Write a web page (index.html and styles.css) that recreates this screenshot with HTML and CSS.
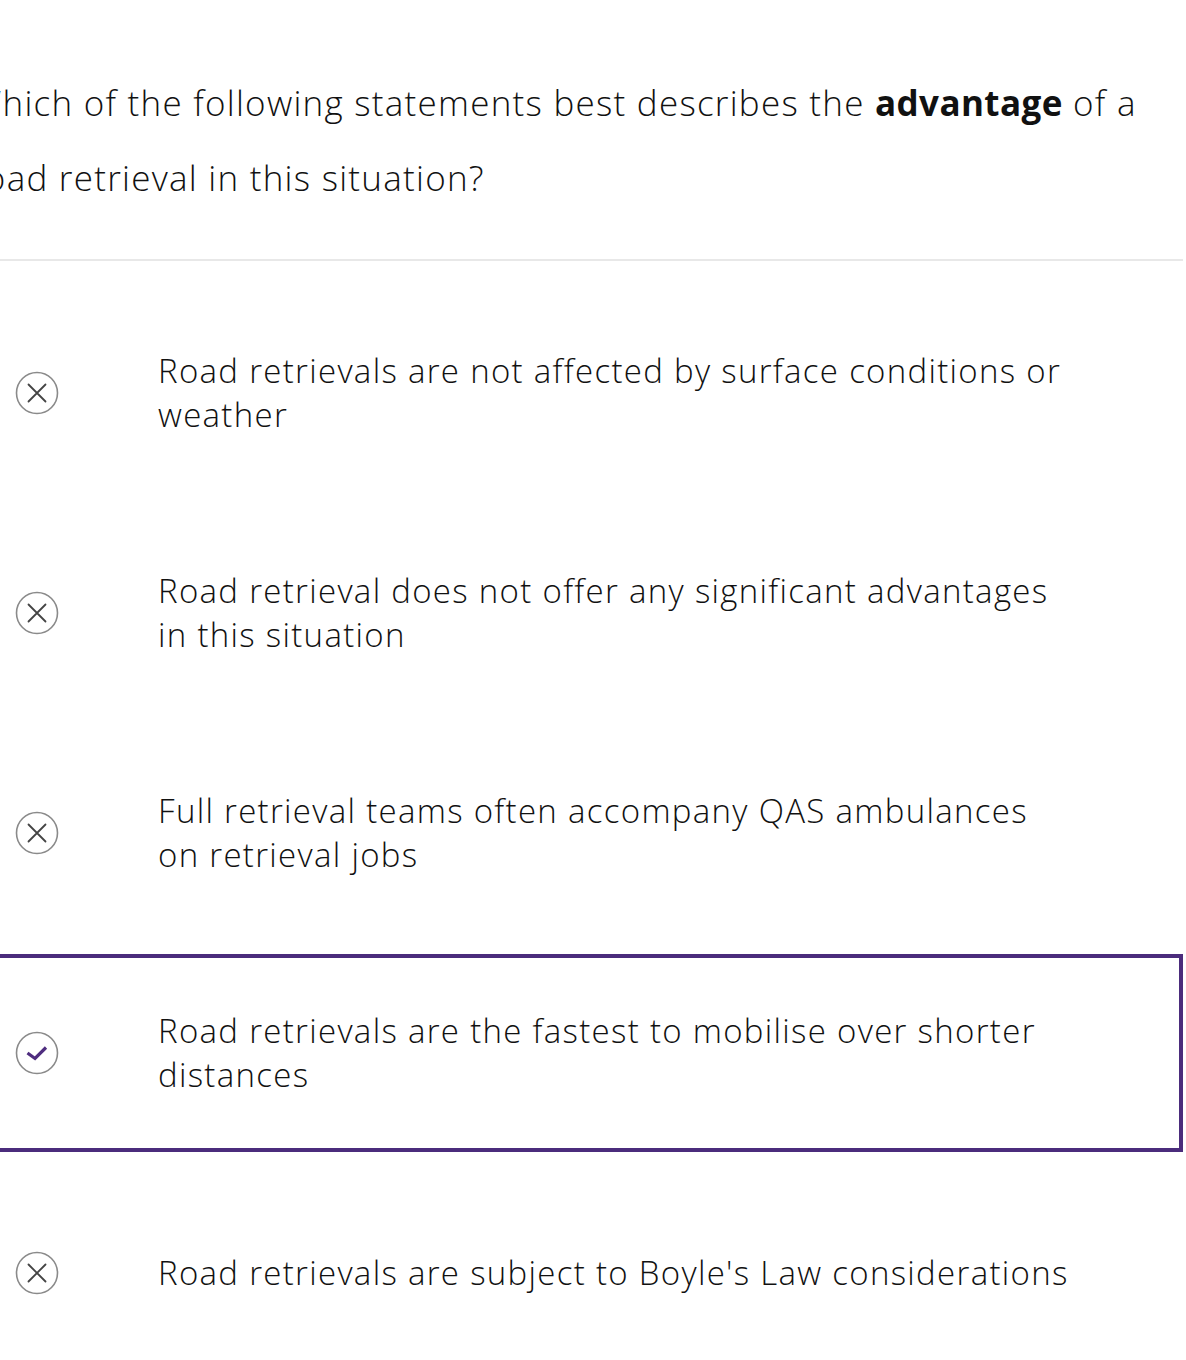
FILE: index.html
```html
<!DOCTYPE html>
<html lang="en">
<head>
<meta charset="utf-8">
<title>Question</title>
<link rel="stylesheet" href="styles.css">
</head>
<body>
<div class="page">
  <p class="question">Which of the following statements best describes the <strong>advantage</strong> of a road retrieval in this situation?</p>
  <div class="divider"></div>
  <ul class="options">
    <li class="option">
      <span class="mark"><svg viewBox="0 0 44 44" width="44" height="44"><circle cx="22" cy="22" r="20.5" fill="none" stroke="#8a8a8a" stroke-width="1.6"/><path d="M13.5 13.5 L30.5 30.5 M30.5 13.5 L13.5 30.5" stroke="#444" stroke-width="1.8" stroke-linecap="round"/></svg></span>
      <span class="text">Road retrievals are not affected by surface conditions or weather</span>
    </li>
    <li class="option">
      <span class="mark"><svg viewBox="0 0 44 44" width="44" height="44"><circle cx="22" cy="22" r="20.5" fill="none" stroke="#8a8a8a" stroke-width="1.6"/><path d="M13.5 13.5 L30.5 30.5 M30.5 13.5 L13.5 30.5" stroke="#444" stroke-width="1.8" stroke-linecap="round"/></svg></span>
      <span class="text">Road retrieval does not offer any significant advantages in this situation</span>
    </li>
    <li class="option">
      <span class="mark"><svg viewBox="0 0 44 44" width="44" height="44"><circle cx="22" cy="22" r="20.5" fill="none" stroke="#8a8a8a" stroke-width="1.6"/><path d="M13.5 13.5 L30.5 30.5 M30.5 13.5 L13.5 30.5" stroke="#444" stroke-width="1.8" stroke-linecap="round"/></svg></span>
      <span class="text">Full retrieval teams often accompany QAS ambulances on retrieval jobs</span>
    </li>
    <li class="option selected">
      <span class="mark"><svg viewBox="0 0 44 44" width="44" height="44"><circle cx="22" cy="22" r="20.5" fill="none" stroke="#8a8a8a" stroke-width="1.6"/><path d="M12.5 22 L20 27.5 L31 16.5" fill="none" stroke="#4f2d7f" stroke-width="3.2" stroke-linecap="butt" stroke-linejoin="miter"/></svg></span>
      <span class="text">Road retrievals are the fastest to mobilise over shorter distances</span>
    </li>
    <li class="option">
      <span class="mark"><svg viewBox="0 0 44 44" width="44" height="44"><circle cx="22" cy="22" r="20.5" fill="none" stroke="#8a8a8a" stroke-width="1.6"/><path d="M13.5 13.5 L30.5 30.5 M30.5 13.5 L13.5 30.5" stroke="#444" stroke-width="1.8" stroke-linecap="round"/></svg></span>
      <span class="text">Road retrievals are subject to Boyle's Law considerations</span>
    </li>
  </ul>
</div>
</body>
</html>
```

FILE: styles.css
```css
html, body {
  margin: 0;
  padding: 0;
  background: #fff;
  overflow: hidden;
}
body {
  font-family: "Open Sans", "Lato", sans-serif;
  color: #111;
}
.page {
  width: 1213px;
  margin-left: -30px;
  padding-top: 65px;
}
.question {
  margin: 0;
  padding: 0 30px 0 0;
  font-size: 35px;
  line-height: 75px;
  font-weight: 300;
  letter-spacing: 1.25px;
}
.question strong {
  font-weight: 700;
  letter-spacing: 0.4px;
}
.divider {
  height: 2px;
  background: #e8e8e8;
  margin-top: 44px;
}
.options {
  list-style: none;
  margin: 33px 0 0;
  padding: 0;
  display: flex;
  flex-direction: column;
  gap: 22px;
}
.option {
  height: 198px;
  box-sizing: border-box;
  border: 4px solid transparent;
  display: flex;
  align-items: center;
  padding-left: 41px;
}
.option.selected {
  border-color: #4b2c7c;
}
.mark {
  width: 44px;
  height: 44px;
  flex: none;
  display: flex;
}
.text {
  margin-left: 99px;
  width: 912px;
  font-size: 33px;
  line-height: 44px;
  font-weight: 300;
  letter-spacing: 1.3px;
}
```
